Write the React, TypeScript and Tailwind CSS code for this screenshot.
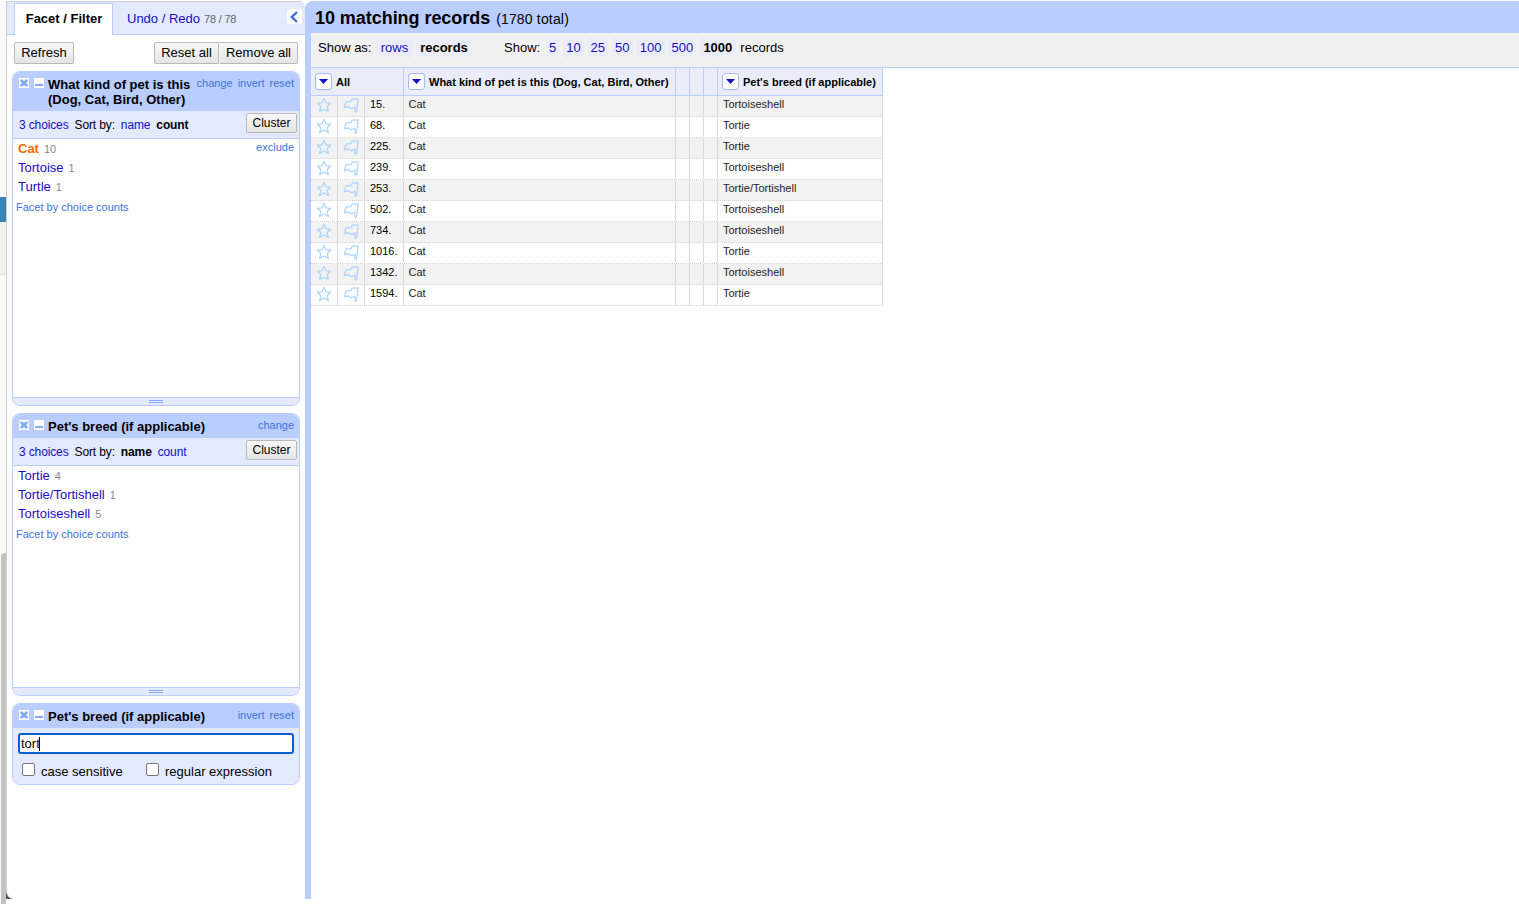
import React from "react";

const link = "text-[#1a0dc8]";

function CloseIcon() {
  return (
    <svg width="10" height="10" viewBox="0 0 10 10" className="shrink-0 bg-white">
      <path d="M1.2 1.5h2.3L5 3.2 6.5 1.5h2.3v1.7L7.2 5l1.6 1.8v1.7H6.5L5 6.8 3.5 8.5H1.2V6.8L2.8 5 1.2 3.2z" fill="#86aaf0" />
    </svg>
  );
}

function MinimizeIcon() {
  return (
    <svg width="10" height="10" viewBox="0 0 10 10" className="shrink-0 bg-white" shapeRendering="crispEdges">
      <path d="M1 6h8v2H1z" fill="#86aaf0" />
    </svg>
  );
}

function Star() {
  return (
    <svg width="16" height="16" viewBox="0 0 16 16" fill="none" stroke="#acd3fc" strokeWidth="1.2" strokeLinejoin="round">
      <path d="M8 1.3 10 5.8 14.6 6.2 11.2 9.5 12.4 14.6 8 12 3.6 14.6 4.8 9.5 1.4 6.2 6 5.8Z" />
    </svg>
  );
}

function Flag() {
  return (
    <svg width="17" height="16" viewBox="0 0 17 16" fill="none" stroke="#acd3fc" strokeWidth="1.2" strokeLinejoin="round">
      <path d="M1.5 10.7 2.8 5.1C4.5 4.2 6 5.4 8.1 4.5L9.2 2.2C11.2 1.4 13 2.7 15.2 1.9L13.6 14.9H11.9L12.1 10.2C10.6 9.8 10.3 11.8 8.6 11.6 7 11.3 6.6 9.8 5 9.8 3.6 9.9 2.8 10.2 1.5 10.7Z" />
    </svg>
  );
}

function Menu() {
  return (
    <span className="flex h-[17px] w-[17px] shrink-0 items-center justify-center rounded-[3px] border border-[#a5b9f8] bg-white">
      <svg width="9" height="5" viewBox="0 0 9 5">
        <path d="M0 0h9L4.5 5z" fill="#1212c8" />
      </svg>
    </span>
  );
}

function Button({ children, className }: { children: React.ReactNode; className: string }) {
  return (
    <button
      className={`flex shrink-0 items-center justify-center whitespace-nowrap border border-[#b9b9b9] bg-linear-to-b from-[#f8f8f8] to-[#e5e5e5] ${className}`}
    >
      {children}
    </button>
  );
}

type FacetProps = {
  title: string[];
  actions: string[];
  height: string;
  headHeight: string;
  children: React.ReactNode;
};

function Facet({ title, actions, height, headHeight, children }: FacetProps) {
  return (
    <section className={`flex w-[288px] flex-col overflow-hidden rounded-lg border border-[#bacdff] bg-white ${height}`}>
      <header className={`flex shrink-0 items-start bg-[#bacdff] pl-[6px] pr-[5px] pt-[5px] ${headHeight}`}>
        <div className="flex gap-[5px] pt-px">
          <CloseIcon />
          <MinimizeIcon />
        </div>
        <h2 className="ml-1 grow whitespace-nowrap text-[13px] font-bold leading-[15px]">
          {title.map((t) => (
            <span key={t} className="block">{t}</span>
          ))}
        </h2>
        <div className="-mt-px flex gap-[5px] text-[11px] leading-[14px] text-[#4272db]">
          {actions.map((a) => (
            <a key={a}>{a}</a>
          ))}
        </div>
      </header>
      {children}
    </section>
  );
}

function ListBody({ sort, items, selected }: { sort: string; items: [string, number][]; selected?: string }) {
  return (
    <>
      <div className="flex h-[28px] shrink-0 items-start border-b border-[#bacdff] bg-[#e3e9ff] pl-[6px] pr-[2px] pt-[2px] text-[12px]">
        <div className="flex grow gap-[6px] whitespace-nowrap pt-[5px] leading-[14px] tracking-[-0.13px]">
          <a className={link}>3 choices</a>
          <span>Sort by:</span>
          {["name", "count"].map((s) => (
            <a key={s} className={s === sort ? "font-bold" : link}>{s}</a>
          ))}
        </div>
        <Button className="h-[20px] w-[51px] rounded-[2px] pb-px text-[12px]">Cluster</Button>
      </div>
      <div className="min-h-0 grow">
        {items.map(([name, count]) => (
          <div key={name} className="flex h-[19px] items-center pl-[5px] pr-[5px] text-[13px]">
            <a className={name === selected ? "font-bold text-[#ff6a00]" : link}>{name}</a>
            <span className="ml-[5px] pt-px text-[11px] text-[#888]">{count}</span>
            {name === selected && <a className="-mt-[3px] ml-auto text-[11px] text-[#4272db]">exclude</a>}
          </div>
        ))}
        <a className="mt-[4px] block pl-[3px] text-[11px] leading-[14px] text-[#4272db]">Facet by choice counts</a>
      </div>
      <div className="flex h-[8px] shrink-0 items-center justify-center border-t border-[#bacdff] bg-[#e3e9ff]">
        <span className="h-[3px] w-[14px] border-y border-[#86aaf0]" />
      </div>
    </>
  );
}

const records: [string, string][] = [
  ["15.", "Tortoiseshell"],
  ["68.", "Tortie"],
  ["225.", "Tortie"],
  ["239.", "Tortoiseshell"],
  ["253.", "Tortie/Tortishell"],
  ["502.", "Tortoiseshell"],
  ["734.", "Tortoiseshell"],
  ["1016.", "Tortie"],
  ["1342.", "Tortoiseshell"],
  ["1594.", "Tortie"],
];

const sizes: [string, string][] = [
  ["5", "w-[13px]"],
  ["10", "w-[21px]"],
  ["25", "w-[20px]"],
  ["50", "w-[21px]"],
  ["100", "w-[28px]"],
  ["500", "w-[28px]"],
  ["1000", "w-[35px]"],
];

function Sidebar() {
  return (
    <aside className="mt-px flex h-[898px] w-[299px] flex-col overflow-hidden rounded-tr-md rounded-bl-lg border-l border-t border-[#ccc] bg-white">
      <nav className="flex h-[33px] shrink-0 border-b border-[#bacdff] bg-[#e3e9ff] pl-[7px]">
        <div className="mt-px flex h-[32px] w-[99px] items-center justify-center whitespace-nowrap border-x border-t border-[#bacdff] bg-white pb-[2px] pl-px text-[13px] font-bold">
          Facet / Filter
        </div>
        <div className="flex h-[33px] grow items-center whitespace-nowrap pl-[14px] text-[13px]">
          <a className={link}>Undo / Redo</a>
          <span className="ml-1 pt-[2px] text-[11px] tracking-[-0.2px] text-[#666]">78 / 78</span>
        </div>
        <span className="mr-[3px] mt-[7px] flex h-[15px] w-[15px] items-center justify-center rounded-[2px] bg-white">
          <svg width="9" height="12" viewBox="0 0 9 12" fill="none" stroke="#3b6ce0" strokeWidth="2.4">
            <path d="M7 1 1.8 6 7 11" />
          </svg>
        </span>
      </nav>
      <div className="flex h-[36px] shrink-0 items-start pl-[7px] pr-[7px] pt-[7px] text-[13px]">
        <Button className="mr-auto h-[22px] w-[60px] rounded-[2px] pb-px">Refresh</Button>
        <Button className="h-[22px] w-[65px] rounded-l-[2px] pb-px">Reset all</Button>
        <Button className="h-[22px] w-[79px] rounded-r-[2px] border-l-[#f8f8f8] pb-px">Remove all</Button>
      </div>
      <div className="flex flex-col gap-[7px] pl-[5px]">
        <Facet
          title={["What kind of pet is this", "(Dog, Cat, Bird, Other)"]}
          actions={["change", "invert", "reset"]}
          height="h-[335px]"
          headHeight="h-[39px]"
        >
          <ListBody sort="count" selected="Cat" items={[["Cat", 10], ["Tortoise", 1], ["Turtle", 1]]} />
        </Facet>
        <Facet title={["Pet's breed (if applicable)"]} actions={["change"]} height="h-[283px]" headHeight="h-[24px]">
          <ListBody sort="name" items={[["Tortie", 4], ["Tortie/Tortishell", 1], ["Tortoiseshell", 5]]} />
        </Facet>
        <Facet title={["Pet's breed (if applicable)"]} actions={["invert", "reset"]} height="h-[82px]" headHeight="h-[24px]">
          <div className="grow bg-[#e3e9ff] px-[5px] pt-[5px] text-[13px]">
            <div className="flex h-[21px] items-center rounded-[3px] border-2 border-[#0b5ed0] bg-white pl-px">
              <span>tort</span>
              <span className="-ml-px h-[14px] w-px bg-black" />
            </div>
            <div className="flex pl-[4px] pt-[9px] leading-[17px]">
              <span className="mr-[6px] h-[13px] w-[13px] rounded-[2px] border border-[#767676] bg-white" />
              <label className="w-[105px] whitespace-nowrap">case sensitive</label>
              <span className="mr-[6px] h-[13px] w-[13px] rounded-[2px] border border-[#767676] bg-white" />
              <label className="whitespace-nowrap">regular expression</label>
            </div>
          </div>
        </Facet>
      </div>
    </aside>
  );
}

const columns = "grid grid-cols-[27px_27px_39px_272px_14px_14px_14px_165px]";
const headCell = "border-r border-b border-[#bacdff] bg-[#ebecf9]";
const cell = "border-r border-r-[#d9d9d9]";

function RecordTable() {
  return (
    <div className="w-[572px] whitespace-nowrap text-[11px]">
      <div className={`${columns} h-[28px] font-bold`}>
        <div className={`${headCell} col-span-3 flex items-center gap-1 pl-1`}>
          <Menu />
          <span className="pt-[2px]">All</span>
        </div>
        <div className={`${headCell} flex items-center gap-1 pl-1`}>
          <Menu />
          <span className="pt-[2px]">What kind of pet is this (Dog, Cat, Bird, Other)</span>
        </div>
        <div className={headCell} />
        <div className={headCell} />
        <div className={headCell} />
        <div className={`${headCell} flex items-center gap-1 pl-1`}>
          <Menu />
          <span className="pt-[2px]">Pet's breed (if applicable)</span>
        </div>
      </div>
      {records.map(([id, breed], i) => (
        <div
          key={id}
          className={`${columns} h-[21px] border-b border-dotted border-[#d4d4d4] leading-[16px] ${i % 2 === 0 ? "bg-[#f2f2f2]" : "bg-white"}`}
        >
          <div className={`${cell} pl-[5px] pt-px`}><Star /></div>
          <div className={`${cell} pl-[5px] pt-px`}><Flag /></div>
          <div className={`${cell} pl-[5px]`}>{id}</div>
          <div className={`${cell} pl-[4.5px] text-[#222]`}>Cat</div>
          <div className={cell} />
          <div className={cell} />
          <div className={cell} />
          <div className={`${cell} pl-[5px] text-[#222]`}>{breed}</div>
        </div>
      ))}
    </div>
  );
}

export default function App() {
  return (
    <div className="flex h-[904px] w-full overflow-hidden bg-white font-['Liberation_Sans',Arial,sans-serif] text-black">
      <div className="flex w-[6px] shrink-0 flex-col bg-[#fafafa]">
        <div className="h-[197px]" />
        <div className="h-[25px] bg-[#3984b0]" />
        <div className="h-[53px] border-b border-[#ddd] bg-[#f0f0f0]" />
        <div className="h-[278px]" />
        <div className="ml-px grow rounded-tl bg-[#c2c2c2]" />
      </div>
      <div className="relative shrink-0">
        <span className="absolute bottom-[5px] left-0 h-[9px] w-[9px] bg-[#57565b]" />
        <div className="relative"><Sidebar /></div>
      </div>
      <main className="mt-px h-[898px] min-w-0 grow rounded-tl-lg border-l-[6px] border-[#bacdff]">
        <header className="flex h-[32px] items-baseline bg-[#bacdff] pl-[4px] pt-[6px]">
          <h1 className="text-[18px] font-bold leading-[22px] tracking-[-0.05px]">10 matching records</h1>
          <span className="ml-[6px] text-[14px] tracking-[0.17px]">(1780 total)</span>
        </header>
        <div className="flex h-[35px] items-start whitespace-nowrap border-b border-[#bacdff] bg-[#f1f1f1] pl-[7px] pt-[5px] text-[13px] leading-[19px]">
          <span className="w-[58px]">Show as:</span>
          <a className={`${link} w-[37px] rounded bg-[#ebecf9] text-center`}>rows</a>
          <a className="ml-[3px] w-[56px] rounded bg-[#ebecf9] text-center font-bold">records</a>
          <span className="ml-[32px] w-[42px]">Show:</span>
          <div className="flex gap-[3.9px]">
            {sizes.map(([n, w]) => (
              <a key={n} className={`${w} rounded bg-[#ebecf9] text-center ${n === "1000" ? "font-bold" : link}`}>{n}</a>
            ))}
          </div>
          <span className="ml-[5px]">records</span>
        </div>
        <RecordTable />
      </main>
    </div>
  );
}
